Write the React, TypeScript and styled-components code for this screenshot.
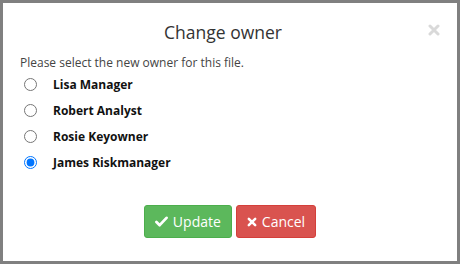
import React, { useState } from "react";
import styled, { createGlobalStyle } from "styled-components";

const Global = createGlobalStyle`
  html, body { margin: 0; padding: 0; background: #808080; }
  body { font-family: "Open Sans", "Noto Sans", sans-serif; }
`;

const Frame = styled.div`
  width: 460px;
  height: 264px;
  box-sizing: border-box;
  border: 3px solid #808080;
  background: #fff;
  display: flex;
  flex-direction: column;
`;

const Header = styled.div`
  position: relative;
  display: flex;
  justify-content: center;
  padding: 17px 14px 0 0;
  height: 28px;
`;

const Title = styled.h4`
  margin: 0;
  font-size: 17.5px;
  font-weight: 400;
  color: #333;
  line-height: 24px;
`;

const Close = styled.button`
  position: absolute;
  right: 17px;
  top: 21px;
  width: 12px;
  height: 12px;
  padding: 0;
  border: none;
  background: none;
  display: flex;
`;

const Body = styled.div`
  padding: 7px 17px 0 17px;
`;

const Description = styled.p`
  margin: 0;
  font-size: 12px;
  color: #444;
  line-height: 16px;
`;

const Options = styled.div`
  display: flex;
  flex-direction: column;
`;

const Option = styled.label`
  display: flex;
  align-items: center;
  height: 26px;
  padding-left: 4px;
  font-size: 12px;
  font-weight: 700;
  color: #111;
`;

const Radio = styled.input`
  margin: 0 16px 0 0;
  width: 13px;
  height: 13px;
`;

const Footer = styled.div`
  display: flex;
  justify-content: center;
  gap: 4px;
  margin-top: 30px;
`;

const Button = styled.button<{ $variant: "success" | "danger" }>`
  height: 33px;
  padding: 0 10px;
  border-radius: 3px;
  border: 1px solid ${(p) => (p.$variant === "success" ? "#4cae4c" : "#d43f3a")};
  background: ${(p) => (p.$variant === "success" ? "#5cb85c" : "#d9534f")};
  color: #fff;
  font-family: "Open Sans", "Noto Sans", sans-serif;
  font-size: 14px;
  display: flex;
  align-items: center;
  gap: 5px;
`;

const names = ["Lisa Manager", "Robert Analyst", "Rosie Keyowner", "James Riskmanager"];

export default function App() {
  const [sel, setSel] = useState(3);
  return (
    <>
      <Global />
      <Frame>
        <Header>
          <Title>Change owner</Title>
          <Close aria-label="Close">
            <svg width="12" height="12" viewBox="0 0 12 12">
              <path d="M2 2 L10 10 M10 2 L2 10" fill="none" stroke="#d9d9d9" strokeWidth="3" strokeLinecap="round" />
            </svg>
          </Close>
        </Header>
        <Body>
          <Description>Please select the new owner for this file.</Description>
          <Options>
            {names.map((n, i) => (
              <Option key={n}>
                <Radio type="radio" name="owner" checked={sel === i} onChange={() => setSel(i)} />
                {n}
              </Option>
            ))}
          </Options>
        </Body>
        <Footer>
          <Button $variant="success">
            <svg width="13" height="11" viewBox="0 0 14 12">
              <path d="M1.5 6.5 L5 10 L12.5 2" fill="none" stroke="#fff" strokeWidth="3" strokeLinecap="round" strokeLinejoin="round" />
            </svg>
            Update
          </Button>
          <Button $variant="danger">
            <svg width="10" height="10" viewBox="0 0 11 11">
              <path d="M2 2 L9 9 M9 2 L2 9" fill="none" stroke="#fff" strokeWidth="2.8" strokeLinecap="round" />
            </svg>
            Cancel
          </Button>
        </Footer>
      </Frame>
    </>
  );
}
